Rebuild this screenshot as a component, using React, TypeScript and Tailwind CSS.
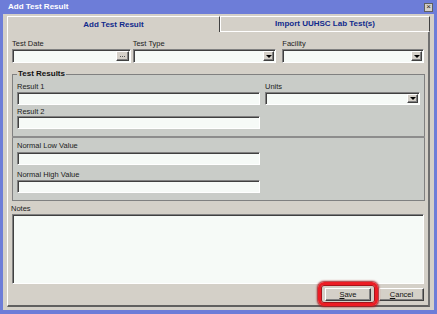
import { ReactNode } from 'react';

const font = { fontFamily: '"Liberation Sans", Arial, sans-serif' };

const sunken =
  'border border-t-[#808080] border-l-[#808080] border-b-white border-r-white bg-[#f6faf7] shadow-[inset_1px_1px_0_#404040]';

const raised =
  'border border-t-white border-l-white border-b-[#404040] border-r-[#404040] bg-[#d4d0c8] shadow-[inset_-1px_-1px_0_#808080]';

function Label({ children }: { children: ReactNode }) {
  return <div className="h-[9px] text-[7.5px] leading-[9px] text-[#1c1c1c]">{children}</div>;
}

function TextBox({ h = 'h-[13px]' }: { h?: string }) {
  return <div className={`${sunken} ${h} w-full`} />;
}

function Combo({ h = 'h-[14px]' }: { h?: string }) {
  return (
    <div className={`${sunken} ${h} flex w-full items-stretch justify-end p-[1px]`}>
      <div className={`${raised} flex w-[11px] items-center justify-center`}>
        <div className="h-0 w-0 border-x-[3px] border-t-[3px] border-x-transparent border-t-black" />
      </div>
    </div>
  );
}

function DateBox() {
  return (
    <div className={`${sunken} flex h-[14px] w-full items-stretch justify-end p-[1px]`}>
      <div className={`${raised} flex w-[13px] items-center justify-center gap-[1px]`}>
        <span className="h-[1px] w-[1px] bg-[#555]" />
        <span className="h-[1px] w-[1px] bg-[#555]" />
        <span className="h-[1px] w-[1px] bg-[#555]" />
      </div>
    </div>
  );
}

export default function App() {
  return (
    <div style={font} className="flex h-[314px] w-[437px] flex-col bg-[#6d7dd8]">
      <div className="flex h-[14px] shrink-0 items-center justify-between pl-[8px] pr-[4px]">
        <span className="text-[8px] font-bold leading-none text-white">Add Test Result</span>
        <div className="flex h-[9px] w-[9px] items-center justify-center border border-[#606060] bg-[#d4d0c8] text-[8px] leading-none text-[#222]">
          ×
        </div>
      </div>

      <div className="mx-[3px] mb-[4px] flex flex-1 flex-col bg-[#d4d0c8] px-[4px] pb-[3px] pt-[2px]">
        <div className="flex h-[16px] shrink-0">
          <div className="flex w-[213px] items-center justify-center border-l border-r border-t border-l-white border-r-[#404040] border-t-white text-[8px] font-bold text-[#102a8c]">
            Add Test Result
          </div>
          <div className="flex flex-1 items-center justify-center border-b border-l border-r border-t border-b-white border-l-white border-r-[#404040] border-t-white text-[8px] font-bold text-[#102a8c]">
            Import UUHSC Lab Test(s)
          </div>
        </div>

        <div className="flex flex-1 flex-col border-b-2 border-l border-r-2 border-b-[#606060] border-l-white border-r-[#707070] px-[4px] pb-[3px] pt-[7px]">
          <div className="flex">
            <div className="w-[119px]">
              <Label>Test Date</Label>
              <div className="mt-[1px]">
                <DateBox />
              </div>
            </div>
            <div className="ml-[2px] w-[144px]">
              <Label>Test Type</Label>
              <div className="mt-[1px]">
                <Combo />
              </div>
            </div>
            <div className="ml-[6px] w-[142px]">
              <Label>Facility</Label>
              <div className="mt-[1px]">
                <Combo />
              </div>
            </div>
          </div>

          <fieldset className="mt-[6px] border border-[#808080] bg-[#c9ccc8] px-[4px] pb-[7px]">
            <legend className="px-[1px] text-[8px] font-bold leading-[10px] text-[#111]">Test Results</legend>
            <div className="mt-[3px] flex">
              <div className="w-[243px]">
                <Label>Result 1</Label>
                <div className="mt-[1px]">
                  <TextBox />
                </div>
                <div className="mt-[2px]">
                  <Label>Result 2</Label>
                </div>
                <TextBox />
              </div>
              <div className="ml-[5px] w-[155px]">
                <Label>Units</Label>
                <div className="mt-[1px]">
                  <Combo h="h-[13px]" />
                </div>
              </div>
            </div>
            <div className="-mx-[5px] mt-[7px] h-[2px] bg-[#8c8c8c]" />
            <div className="w-[243px]">
              <div className="mt-[3px]">
                <Label>Normal Low Value</Label>
              </div>
              <div className="mt-[2px]">
                <TextBox />
              </div>
              <div className="mt-[5px]">
                <Label>Normal High Value</Label>
              </div>
              <div className="mt-[1px]">
                <TextBox />
              </div>
            </div>
          </fieldset>

          <div className="-ml-[1px] mt-[3px]">
            <Label>Notes</Label>
          </div>
          <div className="mt-[1px]">
            <TextBox h="h-[70px]" />
          </div>

          <div className="mt-[4px] flex justify-end gap-[8px]">
            <div className="relative">
              <div className="pointer-events-none absolute -bottom-[5px] -left-[7px] -right-[7px] -top-[6px] rounded-[6px] border-[3px] border-[#ec1c24] shadow-[0_0_2px_1px_#a5141a,inset_0_0_0_1px_#a5141a]" />
              <div className={`${raised} flex h-[13px] w-[46px] items-center justify-center text-[7.5px] text-[#111]`}>
                <span>
                  <span className="underline">S</span>ave
                </span>
              </div>
            </div>
            <div className={`${raised} flex h-[13px] w-[45px] items-center justify-center text-[7.5px] text-[#111]`}>
              <span>
                <span className="underline">C</span>ancel
              </span>
            </div>
          </div>
        </div>
      </div>
    </div>
  );
}
